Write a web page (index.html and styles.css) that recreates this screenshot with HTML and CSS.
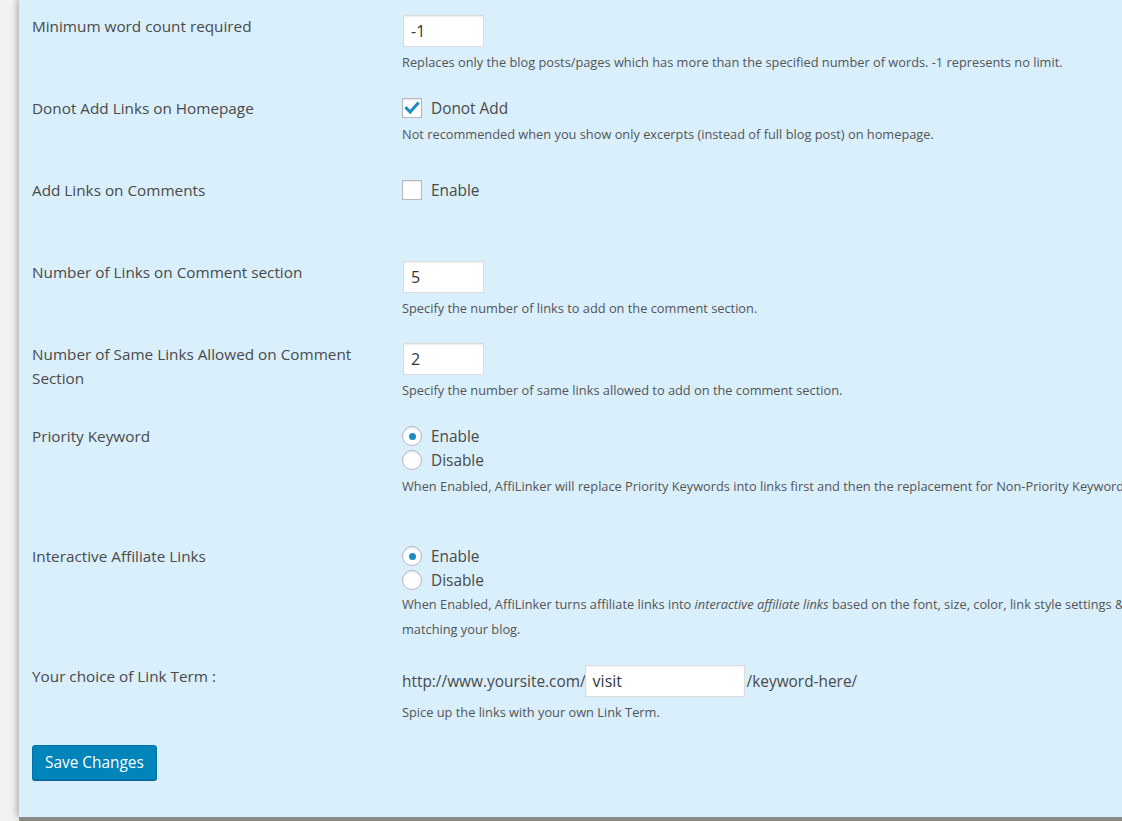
FILE: index.html
```html
<!DOCTYPE html>
<html>
<head>
<meta charset="utf-8">
<link rel="stylesheet" href="styles.css">
</head>
<body>
<div class="panel">
  <div class="row">
    <div class="label">Minimum word count required</div>
    <div class="field">
      <div class="input small">-1</div>
      <p class="desc after-input">Replaces only the blog posts/pages which has more than the specified number of words. -1 represents no limit.</p>
    </div>
  </div>

  <div class="row">
    <div class="label">Donot Add Links on Homepage</div>
    <div class="field">
      <div class="choice">
        <span class="box checked"><svg viewBox="0 0 20 20" width="20" height="20"><path d="M4.5 10.2 L8.2 14 L15.6 5.6" fill="none" stroke="#1e8cbe" stroke-width="3" stroke-linecap="square" stroke-linejoin="miter"/></svg></span>
        <span>Donot Add</span>
      </div>
      <p class="desc after-choice">Not recommended when you show only excerpts (instead of full blog post) on homepage.</p>
    </div>
  </div>

  <div class="row">
    <div class="label">Add Links on Comments</div>
    <div class="field">
      <div class="choice">
        <span class="box"></span>
        <span>Enable</span>
      </div>
    </div>
  </div>

  <div class="row">
    <div class="label">Number of Links on Comment section</div>
    <div class="field">
      <div class="input small">5</div>
      <p class="desc after-input">Specify the number of links to add on the comment section.</p>
    </div>
  </div>

  <div class="row">
    <div class="label">Number of Same Links Allowed on Comment Section</div>
    <div class="field">
      <div class="input small">2</div>
      <p class="desc after-input">Specify the number of same links allowed to add on the comment section.</p>
    </div>
  </div>

  <div class="row tall">
    <div class="label">Priority Keyword</div>
    <div class="field">
      <div class="choice"><span class="radio on"></span><span>Enable</span></div>
      <div class="choice"><span class="radio"></span><span>Disable</span></div>
      <p class="desc after-choice nowrap">When Enabled, AffiLinker will replace Priority Keywords into links first and then the replacement for Non-Priority Keywords.</p>
    </div>
  </div>

  <div class="row tall">
    <div class="label">Interactive Affiliate Links</div>
    <div class="field">
      <div class="choice"><span class="radio on"></span><span>Enable</span></div>
      <div class="choice"><span class="radio"></span><span>Disable</span></div>
      <p class="desc nowrap">When Enabled, AffiLinker turns affiliate links into <em>interactive affiliate links</em> based on the font, size, color, link style settings &amp; colors<br>matching your blog.</p>
    </div>
  </div>

  <div class="row">
    <div class="label">Your choice of Link Term :</div>
    <div class="field">
      <div class="term">
        <span>http://www.yoursite.com/</span>
        <div class="input wide">visit</div>
        <span>/keyword-here/</span>
      </div>
      <p class="desc after-input">Spice up the links with your own Link Term.</p>
    </div>
  </div>

  <div class="actions">
    <button class="button">Save Changes</button>
  </div>
</div>
</body>
</html>
```

FILE: styles.css
```css
html, body {
  margin: 0;
  padding: 0;
  overflow: hidden;
}
body {
  background: #f1f1f1;
  font-family: "Open Sans", "Noto Sans", sans-serif;
  color: #444;
  width: 1122px;
  height: 821px;
}
.panel {
  margin-left: 19px;
  width: 1300px;
  height: 817px;
  box-sizing: border-box;
  background: #d9effc;
  padding-left: 13px;
  box-shadow: 0 4px 0 #8a8a88, -3px 0 5px rgba(0, 0, 0, 0.22);
}
.row {
  display: grid;
  grid-template-columns: 370px 1fr;
  min-height: 82px;
}
.row.tall {
  min-height: 120px;
}
.label {
  padding-top: 14px;
  font-size: 15.3px;
  line-height: 24px;
  color: #4a4a4a;
  padding-right: 20px;
}
.field {
  padding-top: 14px;
  font-size: 15.4px;
}
.input {
  margin-top: 1px;
  height: 32px;
  box-sizing: border-box;
  background: #fff;
  border: 1px solid #dcdcdc;
  box-shadow: inset 0 1px 2px rgba(0, 0, 0, 0.07);
  font-size: 16px;
  line-height: 30px;
  padding-left: 7px;
  color: #32373c;
}
.input.small {
  width: 81px;
  margin-left: 1px;
}
.input.wide {
  width: 160px;
  margin: 1px 2px 0 -1px;
}
.desc {
  margin: 0;
  font-size: 12.8px;
  line-height: 25px;
  color: #555;
}
.desc.after-input {
  margin-top: 3px;
}
.desc.after-choice {
  margin-top: 2px;
}
.desc.nowrap {
  white-space: nowrap;
}
.choice {
  display: flex;
  align-items: center;
  height: 24px;
  gap: 9px;
  color: #4a4a4a;
}
.box {
  width: 20px;
  height: 20px;
  box-sizing: border-box;
  border: 1px solid #b4b9be;
  background: #fff;
  box-shadow: inset 0 1px 2px rgba(0, 0, 0, 0.1);
  display: flex;
}
.box svg {
  margin: -1px;
}
.radio {
  width: 20px;
  height: 20px;
  box-sizing: border-box;
  border: 1px solid #b4b9be;
  border-radius: 50%;
  background: #fff;
  box-shadow: inset 0 1px 2px rgba(0, 0, 0, 0.1);
  display: flex;
  align-items: center;
  justify-content: center;
}
.radio.on::before {
  content: "";
  width: 7px;
  height: 7px;
  border-radius: 50%;
  background: #1e8cbe;
}
.term {
  display: flex;
  align-items: center;
  color: #4a4a4a;
}
.term span {
  padding-top: 2px;
}
.actions {
  padding-top: 13px;
}
.button {
  font-family: "Open Sans", "Noto Sans", sans-serif;
  font-size: 15.4px;
  color: #fff;
  background: #0085ba;
  border: 1px solid #0073aa;
  border-radius: 3px;
  box-shadow: 0 1px 0 #006799;
  height: 35px;
  padding: 0 12px 1px;
  cursor: pointer;
}
```
